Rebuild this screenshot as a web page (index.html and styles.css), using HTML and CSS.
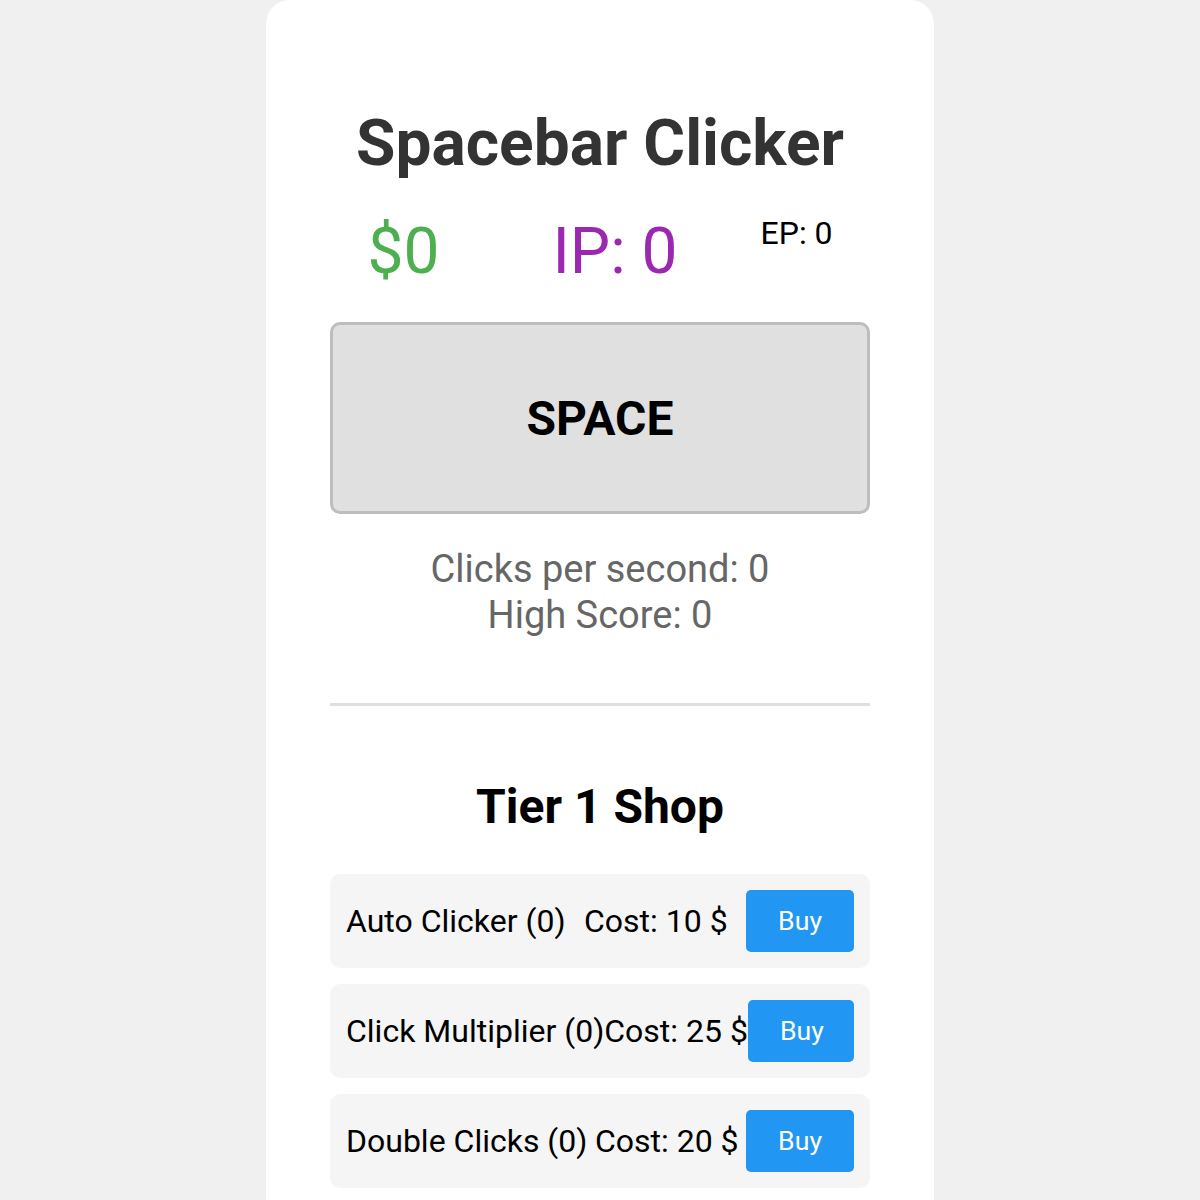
FILE: index.html
```html
<!DOCTYPE html>
<html>
<head>
    <title>Spacebar Clicker</title>
    <link rel="stylesheet" href="styles.css">
</head>
<body>
    <div id="game">
        <h1>Spacebar Clicker</h1>

        <div class="stats">
            <span class="money">$0</span>
            <span class="ip">IP: 0</span>
            <span class="ep">EP: 0</span>
        </div>

        <button type="button" id="spaceButton">SPACE</button>

        <div class="info">
            <div>Clicks per second: 0</div>
            <div>High Score: 0</div>
        </div>

        <hr class="divider">

        <!-- Shop -->
        <h2>Tier 1 Shop</h2>
        <div class="shop">
            <div class="shop-item">
                <span>Auto Clicker (0)</span>
                <span>Cost: 10 $</span>
                <button type="button" class="buy">Buy</button>
            </div>
            <div class="shop-item">
                <span>Click Multiplier (0)</span>
                <span>Cost: 25 $</span>
                <button type="button" class="buy">Buy</button>
            </div>
            <div class="shop-item">
                <span>Double Clicks (0)</span>
                <span>Cost: 20 $</span>
                <button type="button" class="buy">Buy</button>
            </div>
        </div>
    </div>
</body>
</html>
```

FILE: styles.css
```css
body {
    margin: 0;
    font-family: Roboto, "Liberation Sans", sans-serif;
    font-size: 32px;
    background-color: #f0f0f0;
}

#game {
    width: 540px;
    margin: 0 auto;
    padding: 64px 64px 0;
    min-height: 1200px;
    box-sizing: content-box;
    background-color: #ffffff;
    border-radius: 24px 24px 0 0;
    text-align: center;
}

h1 {
    margin: 40px 0 30px;
    font-size: 64px;
    line-height: 80px;
    color: #333333;
}

.stats {
    display: flex;
    justify-content: center;
    align-items: flex-start;
}

.money {
    font-size: 64px;
    color: #4CAF50;
}

.ip {
    font-size: 64px;
    color: #9C27B0;
    margin-left: 113px;
}

.ep {
    color: #000000;
    margin-left: 83px;
}

#spaceButton {
    display: block;
    width: 540px;
    height: 192px;
    margin: 33px 0 32px;
    background-color: #e0e0e0;
    border: 3px solid #bdbdbd;
    border-radius: 10px;
    font-family: inherit;
    font-size: 48px;
    font-weight: bold;
    color: #000000;
}

.info {
    font-size: 38px;
    line-height: 46px;
    color: #666666;
}

.divider {
    margin: 65px 0 0;
    border: none;
    border-top: 3px solid #e0e0e0;
}

h2 {
    margin: 72px 0 39px;
    font-size: 48px;
    color: #000000;
}

.shop {
    display: flex;
    flex-direction: column;
    gap: 16px;
}

.shop-item {
    display: flex;
    justify-content: space-between;
    align-items: center;
    padding: 16px;
    background-color: #f5f5f5;
    border-radius: 10px;
    text-align: left;
    white-space: nowrap;
}

.buy {
    min-width: 0;
    padding: 15px 32px;
    background-color: #2196F3;
    color: white;
    border: none;
    border-radius: 5px;
    font-family: inherit;
    font-size: 26.67px;
}
```
